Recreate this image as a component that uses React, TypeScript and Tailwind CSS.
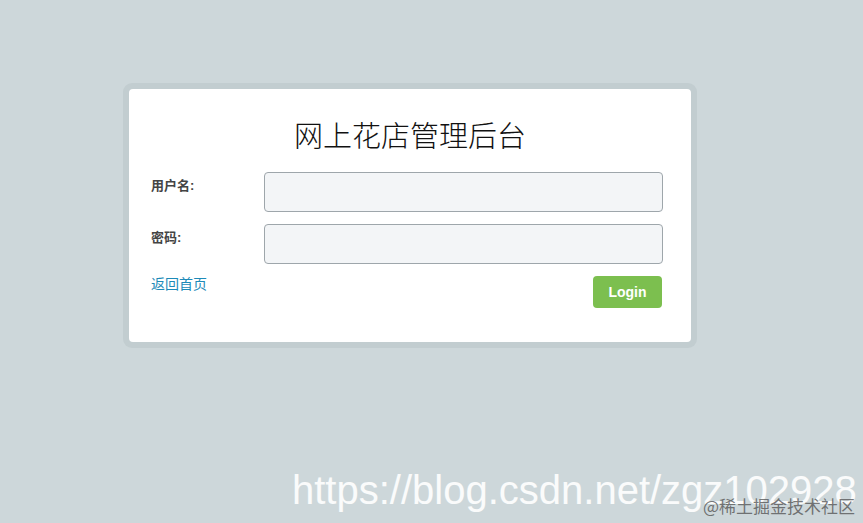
import React from 'react'

const App = () => {
  return (
    <div className="relative w-full h-[523px] overflow-hidden bg-[#cdd7da] font-['Liberation_Sans','Noto_Sans_CJK_SC',sans-serif]">
      <div className="pt-[83px] pl-[123px]">
        <div className="w-[574px] p-[6px] rounded-[9px] bg-[#c2cdd0]">
          <div className="bg-white rounded-[4px] pt-[25px] pb-[34px] pl-[22px] pr-[28px]">
            <h1 className="text-center text-[29px] leading-[40px] font-light text-[#111] font-['Noto_Sans_CJK_SC',serif] pl-[6px]">
              网上花店管理后台
            </h1>

            <div className="mt-[18px] flex items-start">
              <label className="w-[113px] pt-[4px] text-[13px] leading-5 font-bold text-[#444]">用户名:</label>
              <input
                type="text"
                className="w-[399px] h-[40px] rounded-[4px] border border-[#9ea6ab] bg-[#f3f5f7] outline-none px-3"
              />
            </div>

            <div className="mt-[12px] flex items-start">
              <label className="w-[113px] pt-[4px] text-[13px] leading-5 font-bold text-[#444]">密码:</label>
              <input
                type="password"
                className="w-[399px] h-[40px] rounded-[4px] border border-[#9ea6ab] bg-[#f3f5f7] outline-none px-3"
              />
            </div>

            <div className="mt-[12px] flex items-start justify-between pr-[1px]">
              <a href="#" className="text-[14px] leading-[16px] text-[#1d8ab8]">返回首页</a>
              <button className="w-[69px] h-[32px] rounded-[4px] bg-[#7cbf4f] text-white text-[14px] font-bold">
                Login
              </button>
            </div>
          </div>
        </div>
      </div>

      {/* watermark */}
      <div className="absolute left-[292px] top-[466px] text-[40px] leading-[48px] text-white/90 font-['Liberation_Sans',sans-serif] whitespace-nowrap">
        https://blog.csdn.net/zgz102928
      </div>
      <div className="absolute right-[8px] top-[496px] text-[17px] leading-[20px] text-[#555]/80 font-['Noto_Sans_CJK_SC',serif] whitespace-nowrap">
        @稀土掘金技术社区
      </div>
    </div>
  )
}

export default App
